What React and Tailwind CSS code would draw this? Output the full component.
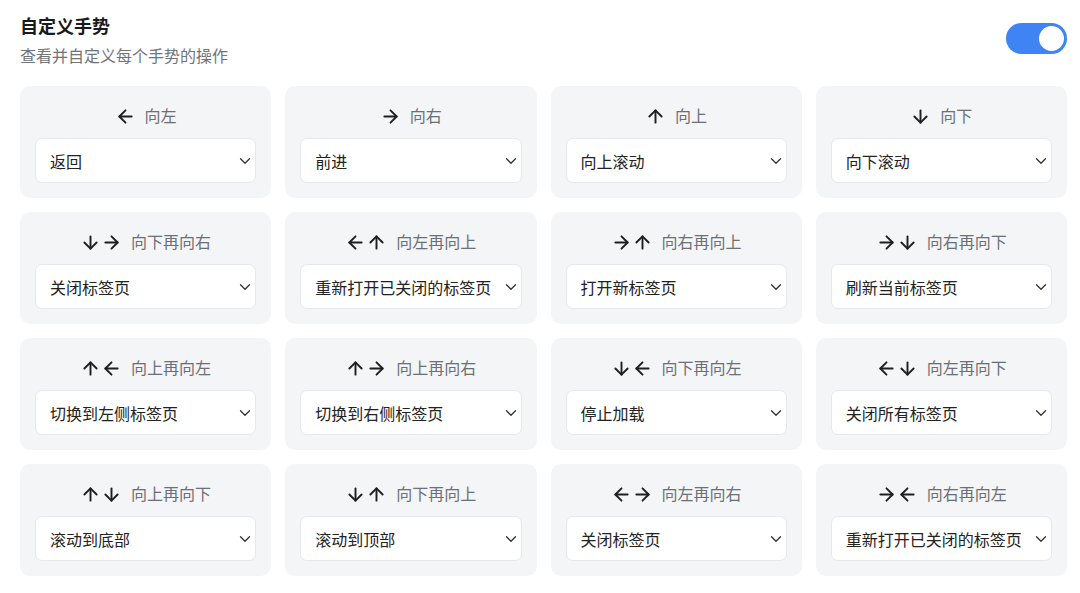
import { ArrowLeft, ArrowRight, ArrowUp, ArrowDown, ChevronDown } from "lucide-react";

const icons = { L: ArrowLeft, R: ArrowRight, U: ArrowUp, D: ArrowDown };

const gestures = [
  { dirs: "L", label: "向左", action: "返回" },
  { dirs: "R", label: "向右", action: "前进" },
  { dirs: "U", label: "向上", action: "向上滚动" },
  { dirs: "D", label: "向下", action: "向下滚动" },
  { dirs: "DR", label: "向下再向右", action: "关闭标签页" },
  { dirs: "LU", label: "向左再向上", action: "重新打开已关闭的标签页" },
  { dirs: "RU", label: "向右再向上", action: "打开新标签页" },
  { dirs: "RD", label: "向右再向下", action: "刷新当前标签页" },
  { dirs: "UL", label: "向上再向左", action: "切换到左侧标签页" },
  { dirs: "UR", label: "向上再向右", action: "切换到右侧标签页" },
  { dirs: "DL", label: "向下再向左", action: "停止加载" },
  { dirs: "LD", label: "向左再向下", action: "关闭所有标签页" },
  { dirs: "UD", label: "向上再向下", action: "滚动到底部" },
  { dirs: "DU", label: "向下再向上", action: "滚动到顶部" },
  { dirs: "LR", label: "向左再向右", action: "关闭标签页" },
  { dirs: "RL", label: "向右再向左", action: "重新打开已关闭的标签页" },
];

function GestureCard({ dirs, label, action }) {
  return (
    <div className="bg-[#f4f5f7] rounded-[10px] px-[15px] pt-4 pb-[15px] h-[112px]">
      <div className="h-7 flex items-center justify-center gap-[9px]">
        <div className="flex items-center text-[#1f1f1f]">
          {dirs.split("").map((d, i) => {
            const Icon = icons[d];
            return <Icon key={i} size={21} strokeWidth={2.2} />;
          })}
        </div>
        <span className="text-[16px] text-[#6b6f76] -mt-[2px]">{label}</span>
      </div>
      <div className="mt-2 h-[45px] bg-white rounded-[7px] border border-[#e6e8eb] flex items-center justify-between pl-[14px] pr-[1px]">
        <span className="text-[16px] text-[#222] whitespace-nowrap">{action}</span>
        <ChevronDown size={18} strokeWidth={1.7} className="text-[#333] shrink-0" />
      </div>
    </div>
  );
}

export default function App() {
  return (
    <div className="bg-white min-h-screen pl-5 pr-[13px] pt-[10px] font-['Noto_Sans_CJK_SC',sans-serif]">
      <div className="flex items-start justify-between">
        <div>
          <h1 className="text-[18px] font-bold text-[#1a1a1a] leading-[30px]">自定义手势</h1>
          <p className="mt-[1px] text-[16px] text-[#707479] leading-[28px]">查看并自定义每个手势的操作</p>
        </div>
        <button className="mt-[13px] w-[61px] h-[31px] rounded-full bg-[#3f84f2] flex items-center justify-end px-[3px]">
          <span className="w-[25px] h-[25px] rounded-full bg-white" />
        </button>
      </div>
      <div className="mt-[17px] grid grid-cols-4 gap-[14px]">
        {gestures.map((g, i) => (
          <GestureCard key={i} {...g} />
        ))}
      </div>
    </div>
  );
}
